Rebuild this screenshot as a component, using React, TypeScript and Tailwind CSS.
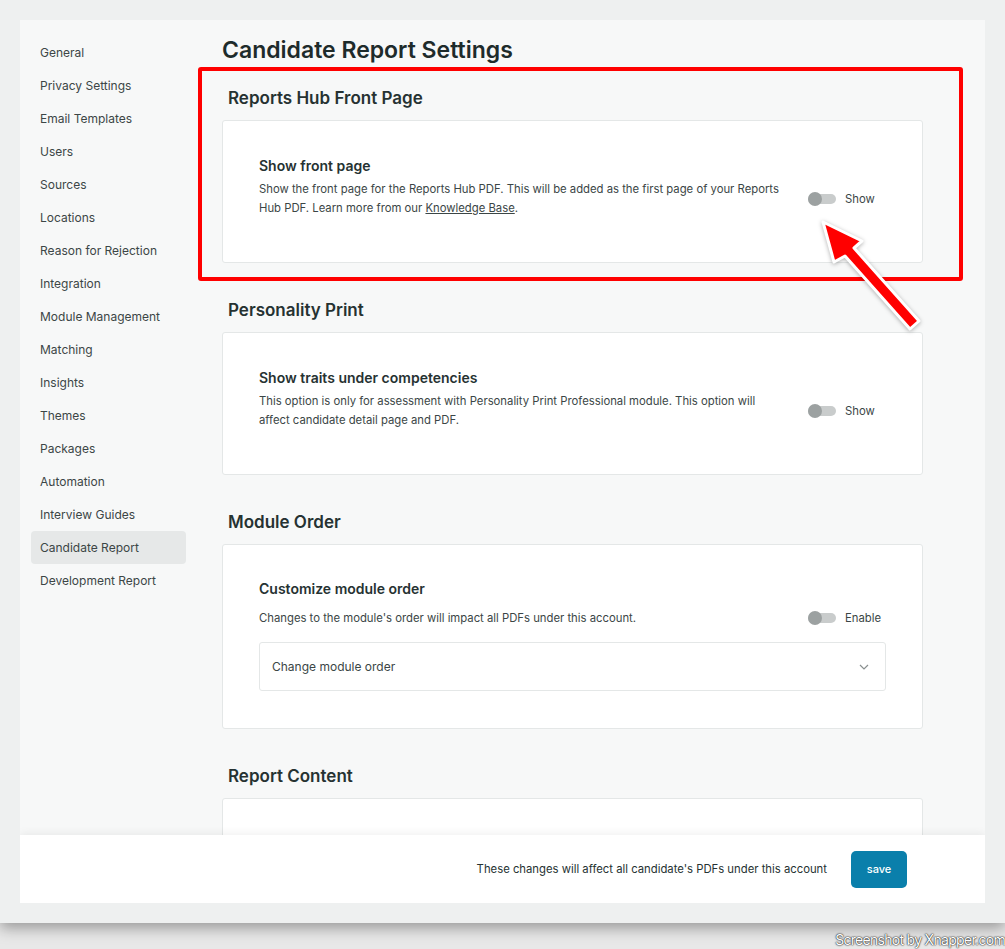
import React from "react";

const menuItems = [
    "General",
    "Privacy Settings",
    "Email Templates",
    "Users",
    "Sources",
    "Locations",
    "Reason for Rejection",
    "Integration",
    "Module Management",
    "Matching",
    "Insights",
    "Themes",
    "Packages",
    "Automation",
    "Interview Guides",
    "Candidate Report",
    "Development Report",
];

const Toggle = ({ label }: { label: string }) => (
    <div className="flex items-center gap-[9px]">
        <div className="relative w-[28px] h-[14px] flex items-center">
            <div className="w-[28px] h-[10px] rounded-full bg-[#c9cccc]" />
            <div className="absolute left-0 top-0 w-[14px] h-[14px] rounded-full bg-[#9ca1a1]" />
        </div>
        <span className="text-[11.3px] text-[#3b4646]">{label}</span>
    </div>
);

const SectionTitle = ({ children }: { children: React.ReactNode }) => (
    <h2 className="mt-[35px] mb-[10px] pl-[6px] text-[17px] leading-[24px] font-semibold text-[#263232]">
        {children}
    </h2>
);

const App = () => {
    return (
        <div
            className="relative w-[1005px] h-[949px] overflow-hidden bg-[#e8e8e8]"
            style={{ fontFamily: "Inter, 'Noto Sans', sans-serif" }}
        >
            <div className="h-[923px] bg-[#eef0f0] pt-[20px] px-[20px] shadow-[0_5px_14px_rgba(0,0,0,0.35)]">
                <div className="h-[883px] bg-[#f7f8f8] flex flex-col overflow-hidden">
                    <div className="flex-1 flex overflow-hidden">
                        {/* settings menu */}
                        <div className="w-[155px] ml-[11px] pt-[16px] shrink-0">
                            {menuItems.map((item) => (
                                <div
                                    key={item}
                                    className={`h-[33px] flex items-center px-[9px] rounded-sm text-[12px] text-[#3c4646] ${
                                        item === "Candidate Report" ? "bg-[#e6e8e8]" : ""
                                    }`}
                                >
                                    {item}
                                </div>
                            ))}
                        </div>

                        <div className="w-[701px] ml-[36px] pt-[14px]">
                            <h1 className="text-[23px] leading-[32px] font-semibold text-[#1e2b2b]">
                                Candidate Report Settings
                            </h1>

                            <h2 className="mt-[20px] mb-[10px] pl-[6px] text-[17px] leading-[24px] font-semibold text-[#263232]">
                                Reports Hub Front Page
                            </h2>
                            <div className="bg-white border border-[#e4e7e7] rounded-[3px] px-[36px] pt-[35px] pb-[44px]">
                                <h3 className="text-[14px] leading-[20px] font-semibold text-[#263232]">
                                    Show front page
                                </h3>
                                <div className="flex items-center mt-[4px]">
                                    <p className="flex-1 pr-[22px] text-[11.3px] leading-[19px] text-[#3b4646]">
                                        Show the front page for the Reports Hub PDF. This will be added as
                                        the first page of your Reports Hub PDF. Learn more from our{" "}
                                        <span className="underline">Knowledge Base</span>.
                                    </p>
                                    <div className="w-[78px] shrink-0">
                                        <Toggle label="Show" />
                                    </div>
                                </div>
                            </div>

                            <SectionTitle>Personality Print</SectionTitle>
                            <div className="bg-white border border-[#e4e7e7] rounded-[3px] px-[36px] pt-[35px] pb-[44px]">
                                <h3 className="text-[14px] leading-[20px] font-semibold text-[#263232]">
                                    Show traits under competencies
                                </h3>
                                <div className="flex items-center mt-[4px]">
                                    <p className="flex-1 pr-[22px] text-[11.3px] leading-[19px] text-[#3b4646]">
                                        This option is only for assessment with Personality Print
                                        Professional module. This option will affect candidate detail
                                        page and PDF.
                                    </p>
                                    <div className="w-[78px] shrink-0">
                                        <Toggle label="Show" />
                                    </div>
                                </div>
                            </div>

                            <SectionTitle>Module Order</SectionTitle>
                            <div className="bg-white border border-[#e4e7e7] rounded-[3px] px-[36px] pt-[34px] pb-[37px]">
                                <h3 className="text-[14px] leading-[20px] font-semibold text-[#263232]">
                                    Customize module order
                                </h3>
                                <div className="flex items-center mt-[9px] h-[20px]">
                                    <p className="flex-1 text-[11.3px] leading-[19px] text-[#3b4646]">
                                        Changes to the module's order will impact all PDFs under this
                                        account.
                                    </p>
                                    <div className="w-[78px] shrink-0">
                                        <Toggle label="Enable" />
                                    </div>
                                </div>
                                <div className="mt-[14px] h-[49px] border border-[#e4e7e7] rounded-[3px] flex items-center justify-between pl-[12px] pr-[16px]">
                                    <span className="text-[12px] text-[#3b4646]">Change module order</span>
                                    <svg width="10" height="6" viewBox="0 0 10 6" fill="none">
                                        <path d="M1 1l4 4 4-4" stroke="#8a9090" strokeWidth="1.2" />
                                    </svg>
                                </div>
                            </div>

                            <SectionTitle>Report Content</SectionTitle>
                            <div className="bg-white border border-[#e4e7e7] rounded-[3px] h-[160px]" />
                        </div>
                    </div>

                    {/* save bar */}
                    <div className="h-[68px] shrink-0 bg-white shadow-[0_-2px_8px_rgba(0,0,0,0.06)] flex items-center justify-end pr-[78px] gap-[24px]">
                        <span className="text-[11.3px] text-[#263232]">
                            These changes will affect all candidate's PDFs under this account
                        </span>
                        <button className="w-[56px] h-[37px] rounded-[5px] bg-[#0a7fab] text-white text-[11px] font-medium">
                            save
                        </button>
                    </div>
                </div>
            </div>

            {/* highlight box */}
            <div className="absolute left-[198px] top-[67px] w-[765px] h-[214px] border-[4px] border-[#ff0000] rounded-[3px]" />

            {/* pointer arrow */}
            <svg
                className="absolute left-0 top-0 pointer-events-none"
                width="1005"
                height="949"
                viewBox="0 0 1005 949"
            >
                <polygon
                    points="823,222 862,241 854,248 919,321 910,329 845,256 834,262"
                    fill="#ff0000"
                    stroke="#ffffff"
                    strokeWidth="3"
                    strokeLinejoin="round"
                    style={{ filter: "drop-shadow(0 1px 2px rgba(0,0,0,0.3))" }}
                />
            </svg>

            <div className="absolute right-0 bottom-[1px] text-[14px] leading-[17px] tracking-tighter text-white [text-shadow:0_0_1px_#000,0_0_2px_rgba(0,0,0,0.9)]">
                Screenshot by Xnapper.com
            </div>
        </div>
    );
};

export default App;
